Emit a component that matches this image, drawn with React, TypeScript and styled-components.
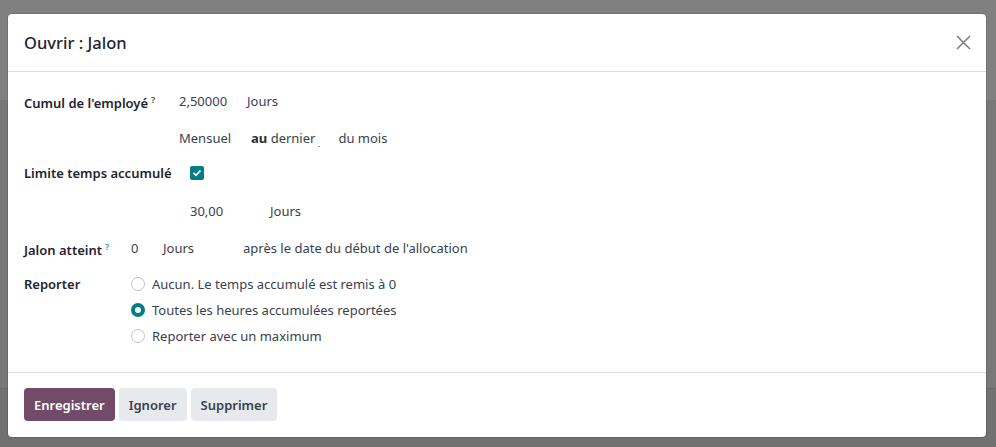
import React from "react";
import styled, { createGlobalStyle } from "styled-components";

const Global = createGlobalStyle`
  html, body { margin: 0; padding: 0; }
  body {
    width: 996px;
    height: 447px;
    overflow: hidden;
    font-family: "Noto Sans", "Open Sans", sans-serif;
    background:
      linear-gradient(to bottom,
        #808080 0px, #808080 100px,
        #787878 100px, #787878 388px,
        #6a6a6a 388px, #6a6a6a 389px,
        #717171 389px, #717171 447px);
  }
`;

const Backdrop = styled.div`
  padding: 14px 10px 0 8px;
`;

const Dialog = styled.div`
  background: #ffffff;
  border-radius: 4px;
  height: 423px;
  display: flex;
  flex-direction: column;
  box-shadow: 0 0 0 1px rgba(0, 0, 0, 0.12);
`;

const Header = styled.div`
  height: 58px;
  border-bottom: 1px solid #dcdcdc;
  display: flex;
  align-items: center;
  justify-content: space-between;
  padding: 0 11px 0 16px;
  box-sizing: border-box;
`;

const Title = styled.h4`
  margin: 0;
  font-size: 16.5px;
  font-weight: 500;
  color: #1f2430;
`;

const Close = styled.button`
  width: 24px;
  height: 24px;
  border: none;
  background: transparent;
  padding: 0;
  display: flex;
  align-items: center;
  justify-content: center;
`;

const Body = styled.div`
  flex: 1;
  padding: 10px 16px 0 16px;
  border-bottom: 1px solid #dcdcdc;
  font-size: 13px;
  color: #374151;
`;

const Row = styled.div<{ $h: number; $indent?: number; $top?: number }>`
  display: flex;
  align-items: center;
  height: ${(p) => p.$h}px;
  padding-left: ${(p) => p.$indent ?? 0}px;
  margin-top: ${(p) => p.$top ?? 0}px;
`;

const TopRow = styled.div<{ $top?: number }>`
  display: flex;
  align-items: flex-start;
  margin-top: ${(p) => p.$top ?? 0}px;
`;

const Label = styled.div<{ $w: number }>`
  width: ${(p) => p.$w}px;
  flex: none;
  font-weight: 600;
  color: #1f2430;
  white-space: nowrap;
  line-height: 26px;
`;

const Help = styled.sup<{ $blue?: boolean }>`
  font-size: 9px;
  font-weight: 600;
  margin-left: 3px;
  color: ${(p) => (p.$blue ? "#1b8bc0" : "#3a3f4a")};
  vertical-align: 5px;
`;

const Field = styled.span<{ $w?: number; $tone?: string; $bold?: boolean }>`
  display: inline-block;
  width: ${(p) => (p.$w ? `${p.$w}px` : "auto")};
  color: ${(p) => p.$tone ?? "#374151"};
  font-weight: ${(p) => (p.$bold ? 700 : 400)};
  white-space: nowrap;
`;

const EmptySelect = styled.span`
  display: inline-block;
  width: 23px;
  height: 14px;
  position: relative;
  &::after {
    content: "";
    position: absolute;
    left: 3px;
    bottom: -2px;
    width: 2px;
    height: 1px;
    background: #9aa0a6;
  }
`;

const Check = styled.span`
  width: 14px;
  height: 14px;
  border-radius: 2px;
  background: #017e84;
  display: inline-flex;
  align-items: center;
  justify-content: center;
`;

const Radios = styled.div`
  display: flex;
  flex-direction: column;
`;

const RadioLine = styled.label`
  display: flex;
  align-items: center;
  height: 26px;
  color: #374151;
`;

const RadioDot = styled.span<{ $on?: boolean }>`
  width: 14px;
  height: 14px;
  box-sizing: border-box;
  border-radius: 50%;
  margin-right: 7px;
  border: ${(p) => (p.$on ? "4px solid #017e84" : "1px solid #bfc3c8")};
  background: #fff;
`;

const Footer = styled.div`
  display: flex;
  gap: 4px;
  padding: 15px 16px 16px 16px;
`;

const Btn = styled.button<{ $primary?: boolean }>`
  height: 33px;
  padding: 0 10px;
  border: none;
  border-radius: 4px;
  font-family: inherit;
  font-size: 13px;
  font-weight: 600;
  background: ${(p) => (p.$primary ? "#714b67" : "#e7e9ed")};
  color: ${(p) => (p.$primary ? "#ffffff" : "#374151")};
`;

export default function App() {
  return (
    <>
      <Global />
      <Backdrop>
        <Dialog>
          <Header>
            <Title>Ouvrir : Jalon</Title>
            <Close aria-label="Fermer">
              <svg width="15" height="15" viewBox="0 0 15 15">
                <path d="M1 1 L14 14 M14 1 L1 14" stroke="#808080" strokeWidth="1.6" fill="none" />
              </svg>
            </Close>
          </Header>
          <Body>
            <Row $h={38}>
              <Label $w={155}>
                Cumul de l'employé<Help>?</Help>
              </Label>
              <Field $w={68}>2,50000</Field>
              <Field $tone="#453a55">Jours</Field>
            </Row>
            <Row $h={36} $indent={155}>
              <Field $w={72}>Mensuel</Field>
              <Field $bold $tone="#2a2f3a">au</Field>
              <Field>&nbsp;dernier</Field>
              <EmptySelect />
              <Field>du mois</Field>
            </Row>
            <Row $h={34}>
              <Label $w={166}>Limite temps accumulé</Label>
              <Check>
                <svg width="10" height="8" viewBox="0 0 10 8">
                  <path d="M1.5 4 L4 6.3 L8.5 1.5" stroke="#fff" strokeWidth="1.8" fill="none" />
                </svg>
              </Check>
            </Row>
            <Row $h={42} $indent={166}>
              <Field $w={80}>30,00</Field>
              <Field $tone="#3d3a48">Jours</Field>
            </Row>
            <Row $h={32}>
              <Label $w={107}>
                Jalon atteint<Help $blue>?</Help>
              </Label>
              <Field $w={32}>0</Field>
              <Field $w={80} $tone="#3d3a48">Jours</Field>
              <Field>après le date du début de l'allocation</Field>
            </Row>
            <TopRow $top={7}>
              <Label $w={107}>Reporter</Label>
              <Radios>
                <RadioLine>
                  <RadioDot />
                  Aucun. Le temps accumulé est remis à 0
                </RadioLine>
                <RadioLine>
                  <RadioDot $on />
                  Toutes les heures accumulées reportées
                </RadioLine>
                <RadioLine>
                  <RadioDot />
                  Reporter avec un maximum
                </RadioLine>
              </Radios>
            </TopRow>
          </Body>
          <Footer>
            <Btn $primary>Enregistrer</Btn>
            <Btn>Ignorer</Btn>
            <Btn>Supprimer</Btn>
          </Footer>
        </Dialog>
      </Backdrop>
    </>
  );
}
